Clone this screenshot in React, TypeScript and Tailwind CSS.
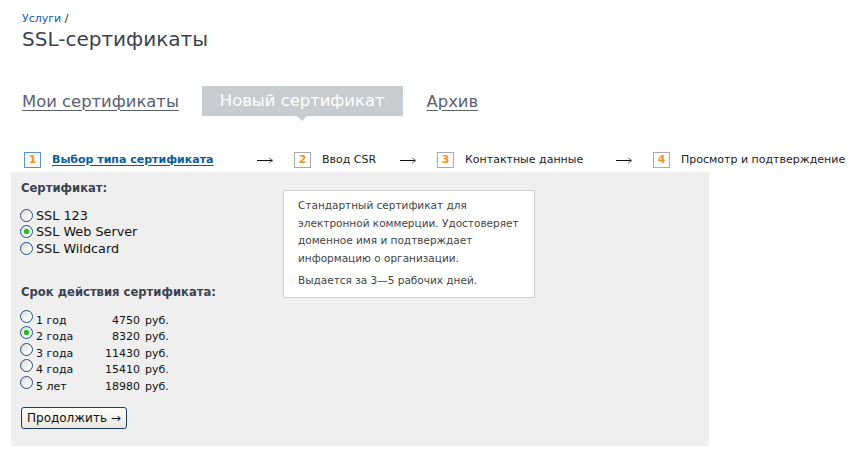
import React from "react";

const CERTS = [
  { id: "ssl123", label: "SSL 123" },
  { id: "webserver", label: "SSL Web Server" },
  { id: "wildcard", label: "SSL Wildcard" },
];

const TERMS = [
  { id: "1", label: "1 год", price: "4750" },
  { id: "2", label: "2 года", price: "8320" },
  { id: "3", label: "3 года", price: "11430" },
  { id: "4", label: "4 года", price: "15410" },
  { id: "5", label: "5 лет", price: "18980" },
];

const STEPS = [
  { n: 1, label: "Выбор типа сертификата", width: "w-[205px]", active: true },
  { n: 2, label: "Ввод CSR", width: "w-[78px]" },
  { n: 3, label: "Контактные данные", width: "w-[151px]" },
  { n: 4, label: "Просмотр и подтверждение", width: "" },
];

function Radio({ checked }: { checked?: boolean }) {
  return (
    <span className="relative inline-block w-[13px] h-[13px] shrink-0 rounded-full border border-[#1d5287] bg-linear-to-br from-[#d8d8d2] via-[#f2f2ee] to-white">
      {checked && (
        <span className="absolute left-[3px] top-[3px] w-[5px] h-[5px] rounded-full bg-[#28b428] shadow-[0_0_1px_#5fd35f]" />
      )}
    </span>
  );
}

function Arrow() {
  return (
    <svg width="17" height="7" viewBox="0 0 17 7" className="shrink-0">
      <line x1="0" y1="3.5" x2="15" y2="3.5" stroke="#111" strokeWidth="1" />
      <path d="M12 1 L16 3.5 L12 6" fill="none" stroke="#777" strokeWidth="1" />
    </svg>
  );
}

export default function App() {
  const [cert, setCert] = React.useState("webserver");
  const [term, setTerm] = React.useState("2");

  return (
    <div className="w-[853px] h-[449px] bg-white font-['DejaVu_Sans',Verdana,sans-serif] text-[#222]">
      {/* header */}
      <div className="pl-[22px] pt-[12px]">
        <div className="text-[11px] leading-[14px]">
          <a href="#" className="text-[#0b5fad]">Услуги</a>
          <span className="text-[#222]"> /</span>
        </div>
        <h1 className="text-[20px] leading-[26px] text-[#3b4351]">SSL-сертификаты</h1>
      </div>

      {/* tabs */}
      <div className="flex items-center mt-[34px] pl-[22px] h-[30px] text-[16.4px] text-[#5a6270]">
        <a href="#" className="mt-[2px] underline underline-offset-[3px] decoration-1">Мои сертификаты</a>
        <div className="relative ml-[23px] h-[30px] px-[18px] flex items-center bg-[#c6ccd0] text-white">
          Новый сертификат
          <span className="absolute left-1/2 -translate-x-1/2 top-full w-0 h-0 border-x-[5px] border-x-transparent border-t-[5px] border-t-[#c6ccd0]" />
        </div>
        <a href="#" className="mt-[2px] ml-[24px] underline underline-offset-[3px] decoration-1">Архив</a>
      </div>

      {/* wizard steps */}
      <div className="flex items-center mt-[36px] pl-[24px] h-[16px] text-[11px]">
        {STEPS.map((s, i) => (
          <React.Fragment key={s.n}>
            <span
              className={
                "w-[17px] h-[16px] flex items-center justify-center border text-[11px] font-bold text-[#f39419] " +
                (s.active ? "border-[#5b93c2] bg-[#f4f8fb]" : "border-[#aaa] bg-white")
              }
            >
              {s.n}
            </span>
            <span
              className={
                "ml-[11px] whitespace-nowrap flex items-center " +
                s.width +
                (s.active ? " font-bold text-[#0a5c9c]" : " text-[#222]")
              }
            >
              <span className={s.active ? "underline underline-offset-2" : ""}>{s.label}</span>
            </span>
            {i < STEPS.length - 1 && (
              <span className="mr-[20px] flex items-center">
                <Arrow />
              </span>
            )}
          </React.Fragment>
        ))}
      </div>

      {/* form panel */}
      <div className="ml-[11px] mt-[4px] w-[698px] h-[274px] bg-[#efefef] flex">
        <div className="w-[272px] pl-[10px] pt-[8px]">
          <div className="text-[11.6px] leading-[16px] font-bold text-[#3b4351]">Сертификат:</div>
          <div className="mt-[11px] flex flex-col">
            {CERTS.map((c) => (
              <label
                key={c.id}
                onClick={() => setCert(c.id)}
                className="flex items-center h-[16.5px] text-[12.8px] text-[#111] cursor-pointer -ml-[1px]"
              >
                <Radio checked={cert === c.id} />
                <span className="ml-[3px]">{c.label}</span>
              </label>
            ))}
          </div>

          <div className="mt-[27px] text-[11.6px] leading-[16px] font-bold text-[#3b4351]">
            Срок действия сертификата:
          </div>
          <div className="mt-[10px] flex flex-col -ml-[1px]">
            {TERMS.map((t) => (
              <label
                key={t.id}
                onClick={() => setTerm(t.id)}
                className="flex items-start h-[16.5px] text-[11px] text-[#111] cursor-pointer"
              >
                <Radio checked={term === t.id} />
                <span className="ml-[3px] mt-[4px] leading-[13px] w-[64px]">{t.label}</span>
                <span className="mt-[4px] leading-[13px] w-[40px] text-right">{t.price}</span>
                <span className="mt-[4px] leading-[13px] ml-[5px]">руб.</span>
              </label>
            ))}
          </div>

          <button
            type="button"
            className="mt-[15px] h-[22px] px-[5px] rounded-[3px] border border-[#1c3e6b] bg-linear-to-b from-white to-[#e9e7dc] text-[12px] text-[#111] leading-none"
          >
            Продолжить →
          </button>
        </div>

        <div className="mt-[18px] w-[252px] h-[108px] self-start bg-white border border-[#cfcfcf] pl-[14px] pr-[8px] pt-[6px] text-[10.5px] leading-[17.7px] text-[#444]">
          <p>
            Стандартный сертификат для электронной коммерции. Удостоверяет доменное имя и подтверждает
            информацию о организации.
          </p>
          <p className="mt-[4px]">Выдается за 3—5 рабочих дней.</p>
        </div>
      </div>
    </div>
  );
}
